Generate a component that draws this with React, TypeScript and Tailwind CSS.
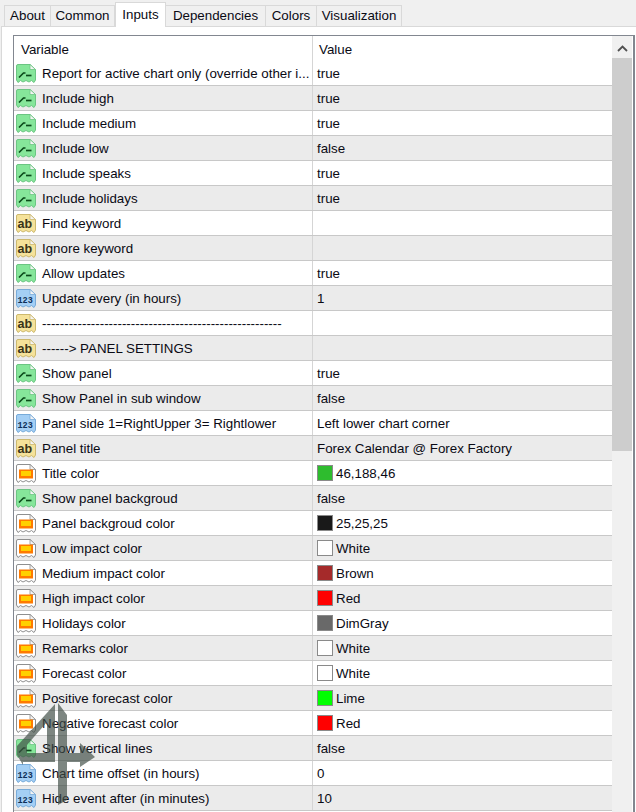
import type { ReactNode } from 'react';

type Kind = 'bool' | 'text' | 'num' | 'color';

interface Row {
  kind: Kind;
  name: string;
  value: string;
  swatch?: string;
}

const TABS = ['About', 'Common', 'Inputs', 'Dependencies', 'Colors', 'Visualization'];

const ROWS: Row[] = [
  { kind: 'bool', name: 'Report for active chart only (override other i...', value: 'true' },
  { kind: 'bool', name: 'Include high', value: 'true' },
  { kind: 'bool', name: 'Include medium', value: 'true' },
  { kind: 'bool', name: 'Include low', value: 'false' },
  { kind: 'bool', name: 'Include speaks', value: 'true' },
  { kind: 'bool', name: 'Include holidays', value: 'true' },
  { kind: 'text', name: 'Find keyword', value: '' },
  { kind: 'text', name: 'Ignore keyword', value: '' },
  { kind: 'bool', name: 'Allow updates', value: 'true' },
  { kind: 'num', name: 'Update every (in hours)', value: '1' },
  { kind: 'text', name: '------------------------------------------------------', value: '' },
  { kind: 'text', name: '------> PANEL SETTINGS', value: '' },
  { kind: 'bool', name: 'Show panel', value: 'true' },
  { kind: 'bool', name: 'Show Panel in sub window', value: 'false' },
  { kind: 'num', name: 'Panel side 1=RightUpper 3= Rightlower', value: 'Left lower chart corner' },
  { kind: 'text', name: 'Panel title', value: 'Forex Calendar @ Forex Factory' },
  { kind: 'color', name: 'Title color', value: '46,188,46', swatch: 'bg-[#2ebc2e]' },
  { kind: 'bool', name: 'Show panel backgroud', value: 'false' },
  { kind: 'color', name: 'Panel backgroud color', value: '25,25,25', swatch: 'bg-[#191919]' },
  { kind: 'color', name: 'Low impact color', value: 'White', swatch: 'bg-white' },
  { kind: 'color', name: 'Medium impact color', value: 'Brown', swatch: 'bg-[#a52a2a]' },
  { kind: 'color', name: 'High impact color', value: 'Red', swatch: 'bg-[#ff0000]' },
  { kind: 'color', name: 'Holidays color', value: 'DimGray', swatch: 'bg-[#696969]' },
  { kind: 'color', name: 'Remarks color', value: 'White', swatch: 'bg-white' },
  { kind: 'color', name: 'Forecast color', value: 'White', swatch: 'bg-white' },
  { kind: 'color', name: 'Positive forecast color', value: 'Lime', swatch: 'bg-[#00ff00]' },
  { kind: 'color', name: 'Negative forecast color', value: 'Red', swatch: 'bg-[#ff0000]' },
  { kind: 'bool', name: 'Show vertical lines', value: 'false' },
  { kind: 'num', name: 'Chart time offset (in hours)', value: '0' },
  { kind: 'num', name: 'Hide event after (in minutes)', value: '10' },
];

const SHEET = 'M1.5 3 Q1.5 1.5 3 1.5 H15 L20.5 6.5 V17 L19 19.5 L16.5 17.5 L14 19 L11 17.5 L8 19 L5.5 17.5 L3 19.5 L1.5 17 Z';

function Sheet({ fill, stroke, children }: { fill: string; stroke: string; children: ReactNode }) {
  return (
    <svg width="22" height="21" viewBox="0 0 22 21" className="shrink-0">
      <path d={SHEET} fill={fill} stroke={stroke} strokeWidth="1" />
      <path d="M15 1.5 V6.5 H20.5 Z" fill="#f4f4f4" stroke={stroke} strokeWidth="0.8" />
      {children}
    </svg>
  );
}

function RowIcon({ kind }: { kind: Kind }) {
  if (kind === 'bool') {
    return (
      <Sheet fill="#86e69a" stroke="#6cc583">
        <path d="M4 14.5 L8.5 10 L10.5 10" fill="none" stroke="#0b4a1a" strokeWidth="1.7" />
        <path d="M11 12.5 H16.5" fill="none" stroke="#0b4a1a" strokeWidth="1.7" />
      </Sheet>
    );
  }
  if (kind === 'text') {
    return (
      <Sheet fill="#f5e29a" stroke="#cdb96e">
        <text x="2.5" y="15" fontSize="12.5" fontWeight="700" fontFamily="'Liberation Sans', sans-serif" fill="#3a3418">
          ab
        </text>
      </Sheet>
    );
  }
  if (kind === 'num') {
    return (
      <Sheet fill="#a4cff5" stroke="#78abd9">
        <text x="2.5" y="15" fontSize="8.5" fontWeight="700" fontFamily="'Liberation Mono', monospace" fill="#0f2f58">
          123
        </text>
      </Sheet>
    );
  }
  return (
    <Sheet fill="#ffffff" stroke="#8f8f8f">
      <rect x="4" y="6.5" width="14" height="9" fill="#ff7a00" />
      <rect x="6" y="8" width="10" height="5" fill="#ffd000" />
    </Sheet>
  );
}

function Watermark() {
  return (
    <svg width="90" height="112" viewBox="0 0 90 112" className="absolute left-[15px] top-[700px]">
      <g fill="#3f4d45" fillOpacity="0.68">
        <path d="M40 4 L2 46 V55 L8 65 V62 H40 Z M32 22 L12 45 V53 H32 Z" fillRule="evenodd" />
        <path d="M43 3 L52 15 V53 H65 V43 L80 57 L65 67 V62 H52 V100 L43 105 Z" />
      </g>
    </svg>
  );
}

export default function App() {
  return (
    <div className="relative h-[812px] w-[636px] overflow-hidden bg-[#f0f0f0] font-['Liberation_Sans',sans-serif] text-[13.33px] text-[#0a0a14]">
      <div className="flex h-[26px] items-end pl-[4px]">
        {TABS.map((tab) =>
          tab === 'Inputs' ? (
            <div
              key={tab}
              className="relative z-10 -mb-px flex h-[25px] w-[51px] items-start justify-center border border-b-0 border-[#d9d9d9] bg-white pt-[2px]"
            >
              {tab}
            </div>
          ) : (
            <div
              key={tab}
              className={`flex h-[21px] items-center justify-center border border-b-0 border-l-0 border-[#d9d9d9] first:border-l ${
                tab === 'About' ? 'w-[47px]' : tab === 'Common' ? 'w-[64px]' : tab === 'Dependencies' ? 'w-[100px]' : tab === 'Colors' ? 'w-[51px]' : 'w-[85px]'
              }`}
            >
              {tab}
            </div>
          ),
        )}
      </div>

      <div className="ml-px h-[786px] border-t border-l border-[#d9d9d9] bg-white pt-[8px] pl-[11px]">
        <div className="flex h-[800px] w-[622px] border-t border-l border-r-2 border-[#828790] bg-white">
          <div className="w-[598px]">
            <div className="flex h-[25px] items-center">
              <div className="w-[298px] pt-[2px] pl-[7px]">Variable</div>
              <div className="h-full border-l border-[#d5d5d5] pl-[6px] leading-[27px]">Value</div>
            </div>
            {ROWS.map((row, i) => (
              <div key={row.name} className={`flex h-[25px] border-b border-[#c8c8c8] ${i % 2 === 1 ? 'bg-[#ebebeb]' : 'bg-white'}`}>
                <div className="flex w-[298px] items-center gap-[5px] pl-[1px]">
                  <RowIcon kind={row.kind} />
                  <span className="whitespace-nowrap pt-[2px]">{row.name}</span>
                </div>
                <div className="flex flex-1 items-center gap-[3px] border-l border-[#d5d5d5] pl-[4px]">
                  {row.swatch && <span className={`h-[16px] w-[16px] border border-[#8a8a8a] ${row.swatch}`} />}
                  <span className="pt-[2px]">{row.value}</span>
                </div>
              </div>
            ))}
          </div>
          <div className="flex w-[20px] flex-col bg-[#f0f0f0]">
            <div className="flex h-[22px] items-center justify-center pt-[2px]">
              <svg width="11" height="7" viewBox="0 0 11 7">
                <path d="M1 6 L5.5 1.5 L10 6" fill="none" stroke="#505050" strokeWidth="1.8" />
              </svg>
            </div>
            <div className="h-[393px] bg-[#cdcdcd]" />
          </div>
        </div>
      </div>
      <Watermark />
    </div>
  );
}
